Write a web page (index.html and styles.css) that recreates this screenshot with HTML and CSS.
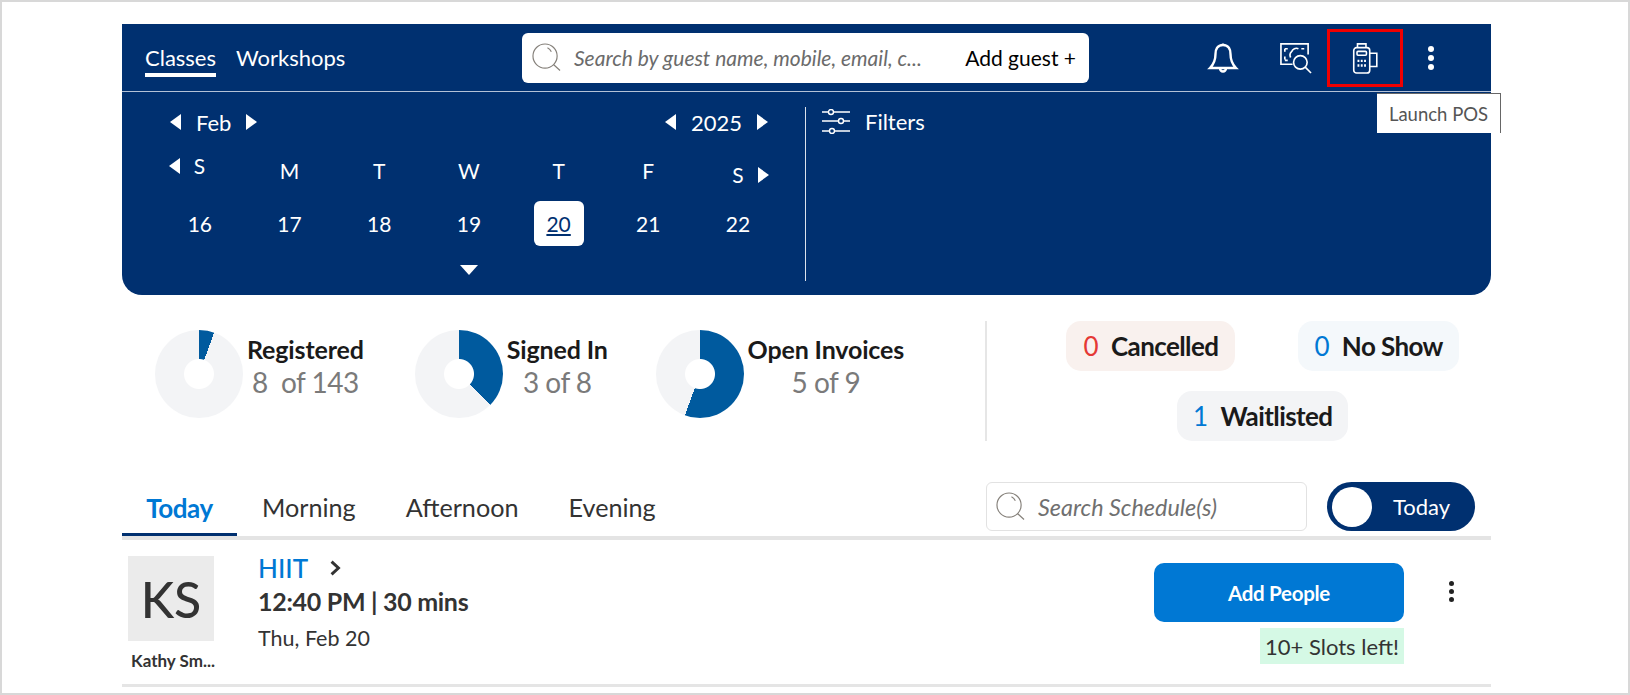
FILE: index.html
```html
<!DOCTYPE html>
<html lang="en">
<head>
    <meta charset="UTF-8">
    <title>Classes</title>
    <link rel="stylesheet" href="styles.css">
</head>
<body>
<div class="frame">
    <!-- Navy header panel -->
    <div class="panel">
        <div class="topbar">
            <div class="nav-tabs">
                <span class="nav-tab active">Classes</span>
                <span class="nav-tab">Workshops</span>
            </div>
            <div class="guest-search">
                <svg class="search-icon" viewBox="0 0 30 30"><circle cx="13.5" cy="13.5" r="12.5"/><path d="M22.5 22.5 L29 28.5 M16 5 A9 9 0 0 1 20 9"/></svg>
                <span class="guest-placeholder">Search by guest name, mobile, email, c...</span>
                <span class="add-guest">Add guest +</span>
            </div>
            <div class="top-icons">
                <svg class="top-icon bell" viewBox="0 0 32 32"><path d="M16 3 C10 3 8.500 8 8.500 12 C8.500 18 7 22 3 26 H29 C25 22 23.500 18 23.500 12 C23.500 8 22 3 16 3 Z M16 3 V1.500 M13 26.500 A3 3 0 0 0 19 26.500"/></svg>
                <svg class="top-icon money" viewBox="0 0 34 34"><path d="M14 24 H2 V3 H30 V14 M6 8 H9 M6 8 V11 M26 8 H23 M6 19 V16 M9 20 H6 M20 8 A5 5 0 0 0 13 11 M13 11 A5 5 0 0 0 12 17"/><circle cx="22" cy="22" r="7"/><path d="M27 27 L33 33"/></svg>
                <div class="pos-box">
                    <svg class="pos-icon" viewBox="0 0 28 34"><rect x="1.500" y="6" width="17" height="27" rx="3"/><path d="M5.500 6 V2 H14.500 V6 M18.500 12 H26 V26 H18.500"/><rect x="5" y="10" width="10" height="4" rx="1"/><path d="M5.500 20 H7.500 M9 20 H11 M12.500 20 H14.500 M5.500 25 H7.500 M9 25 H11 M12.500 25 H14.500" stroke-width="2.500"/></svg>
                </div>
                <div class="kebab light"><i></i><i></i><i></i></div>
            </div>
        </div>
        <div class="tooltip">Launch POS</div>
        <div class="cal-area">
            <div class="calendar">
                <div class="cal-head">
                    <div class="stepper"><span class="tri left"></span><span class="step-label">Feb</span><span class="tri right"></span></div>
                    <div class="stepper"><span class="tri left"></span><span class="step-label">2025</span><span class="tri right"></span></div>
                </div>
                <div class="week-row">
                    <div class="wd first"><span class="tri left"></span>S</div>
                    <div class="wd">M</div>
                    <div class="wd">T</div>
                    <div class="wd">W</div>
                    <div class="wd">T</div>
                    <div class="wd">F</div>
                    <div class="wd last">S<span class="tri right"></span></div>
                </div>
                <div class="day-row">
                    <div class="day"><span>16</span></div>
                    <div class="day"><span>17</span></div>
                    <div class="day"><span>18</span></div>
                    <div class="day"><span>19</span></div>
                    <div class="day"><span class="selected">20</span></div>
                    <div class="day"><span>21</span></div>
                    <div class="day"><span>22</span></div>
                </div>
                <div class="expand-row"><span class="tri down"></span></div>
            </div>
            <div class="filters">
                <svg class="filter-icon" viewBox="0 0 28 25"><path d="M0 3 H6 M12 3 H28 M0 12 H16 M22 12 H28 M0 22 H7 M13 22 H28"/><circle cx="9" cy="3" r="2.500"/><circle cx="19" cy="12" r="2.500"/><circle cx="10" cy="22" r="2.500"/></svg>
                <span>Filters</span>
            </div>
        </div>
    </div>

    <!-- Counts -->
    <div class="stats">
        <div class="stat stat-reg">
            <div class="donut" style="--pct: 5.6%"></div>
            <div class="stat-text"><div class="stat-title">Registered</div><div class="stat-value">8&nbsp; of 143</div></div>
        </div>
        <div class="stat stat-sign">
            <div class="donut" style="--pct: 37.5%"></div>
            <div class="stat-text"><div class="stat-title">Signed In</div><div class="stat-value">3 of 8</div></div>
        </div>
        <div class="stat stat-open">
            <div class="donut" style="--pct: 55.6%"></div>
            <div class="stat-text"><div class="stat-title">Open Invoices</div><div class="stat-value">5 of 9</div></div>
        </div>
        <div class="chips">
            <div class="chip-row">
                <div class="chip chip-cancel"><b class="red">0</b>Cancelled</div>
                <div class="chip chip-noshow"><b>0</b>No Show</div>
            </div>
            <div class="chip-row">
                <div class="chip chip-wait"><b>1</b>Waitlisted</div>
            </div>
        </div>
    </div>

    <!-- Schedule tabs -->
    <div class="sched-bar">
        <div class="sched-tabs">
            <span class="sched-tab active">Today</span>
            <span class="sched-tab">Morning</span>
            <span class="sched-tab">Afternoon</span>
            <span class="sched-tab">Evening</span>
        </div>
        <div class="sched-tools">
            <div class="sched-search">
                <svg class="search-icon" viewBox="0 0 30 30"><circle cx="13.5" cy="13.5" r="12.5"/><path d="M22.5 22.5 L29 28.5 M16 5 A9 9 0 0 1 20 9"/></svg>
                <span>Search Schedule(s)</span>
            </div>
            <div class="toggle"><span class="knob"></span><span>Today</span></div>
        </div>
    </div>

    <!-- Class row -->
    <div class="class-row">
        <div class="instructor">
            <div class="avatar">KS</div>
            <div class="instructor-name">Kathy Sm...</div>
        </div>
        <div class="class-info">
            <div class="class-name">HIIT <svg class="chevron" viewBox="0 0 10 14"><path d="M2 1.500 L8 7 L2 12.500"/></svg></div>
            <div class="class-time">12:40 PM | 30 mins</div>
            <div class="class-date">Thu, Feb 20</div>
        </div>
        <div class="class-actions">
            <div class="add-col">
                <div class="add-btn">Add People</div>
                <div class="slots">10+ Slots left!</div>
            </div>
            <div class="kebab dark"><i></i><i></i><i></i></div>
        </div>
    </div>
</div>
</body>
</html>
```

FILE: styles.css
```css
* {
    box-sizing: border-box;
}
body {
    margin: 0;
    font-family: 'Lato', 'Open Sans', sans-serif;
    background-color: #fff;
    color: #222;
}
.frame {
    width: 1630px;
    height: 695px;
    border: 2px solid #d8d8d8;
    padding: 22px 137px 0 120px;
    overflow: hidden;
    position: relative;
}

/* panel */
.panel {
    background-color: #003070;
    color: #fff;
    height: 271px;
    border-radius: 0 0 20px 20px;
}
.topbar {
    display: flex;
    align-items: center;
    height: 68px;
    border-bottom: 1px solid #b3c1d6;
    padding-left: 23px;
}
.nav-tabs {
    display: flex;
    gap: 20px;
    width: 377px;
    font-size: 22px;
}
.nav-tab {
    padding: 6px 0 2px;
    border-bottom: 4px solid transparent;
}
.nav-tab.active {
    border-bottom-color: #fff;
}
.guest-search {
    display: flex;
    align-items: center;
    width: 567px;
    height: 50px;
    background-color: #fff;
    border-radius: 6px;
    padding: 0 13px 0 10px;
    color: #000;
}
.search-icon {
    width: 29px;
    height: 29px;
    fill: none;
    stroke: #85807a;
    stroke-width: 1.2;
    flex: none;
}
.guest-placeholder {
    flex: 1;
    margin-left: 13px;
    font-size: 21px;
    font-style: italic;
    color: #6b6b6b;
    white-space: nowrap;
}
.add-guest {
    font-size: 21px;
    white-space: nowrap;
}
.top-icons {
    display: flex;
    align-items: center;
    margin-left: 118px;
}
.top-icon {
    fill: none;
    stroke: #fff;
    stroke-width: 2.4;
}
.bell {
    width: 32px;
    height: 32px;
}
.money {
    width: 33px;
    height: 33px;
    margin-left: 40px;
    stroke-width: 1.7;
}
.pos-box {
    width: 76px;
    height: 58px;
    margin-left: 15px;
    border: 3px solid #f00000;
    display: flex;
    align-items: center;
    justify-content: center;
}
.pos-icon {
    width: 27px;
    height: 32px;
    fill: none;
    stroke: #fff;
    stroke-width: 1.7;
}
.kebab {
    display: flex;
    flex-direction: column;
    gap: 3px;
}
.kebab i {
    width: 6px;
    height: 6px;
    border-radius: 50%;
    background-color: #fff;
}
.kebab.light {
    margin-left: 25px;
}
.kebab.dark i {
    background-color: #222;
    width: 5px;
    height: 5px;
}
.tooltip {
    position: absolute;
    left: 1375px;
    top: 91px;
    width: 124px;
    height: 40px;
    background-color: #fff;
    color: #555;
    border-top: 1px solid #666;
    border-right: 1px solid #666;
    font-size: 18.5px;
    display: flex;
    align-items: center;
    justify-content: center;
}

/* calendar */
.cal-area {
    display: flex;
    padding-top: 15px;
}
.calendar {
    width: 684px;
    height: 174px;
    border-right: 1px solid #dbe2ec;
    padding-left: 33px;
    padding-right: 21px;
}
.cal-head {
    display: flex;
    justify-content: space-between;
    padding: 0 16px 0 15px;
    height: 30px;
    align-items: center;
}
.stepper {
    display: flex;
    align-items: center;
    gap: 15px;
    font-size: 22px;
}
.tri {
    display: inline-block;
    width: 0;
    height: 0;
    border-style: solid;
    border-color: transparent;
}
.tri.left {
    border-width: 8px 11px 8px 0;
    border-right-color: #fff;
}
.tri.right {
    border-width: 8px 0 8px 11px;
    border-left-color: #fff;
}
.tri.down {
    border-width: 10px 9px 0 9px;
    border-top-color: #fff;
}
.week-row, .day-row {
    display: grid;
    grid-template-columns: repeat(7, 89.7px);
}
.week-row {
    height: 55px;
    font-size: 21px;
    align-items: start;
    margin-top: 9px;
}
.wd {
    text-align: center;
    padding-top: 12px;
}
.wd.first {
    display: flex;
    justify-content: center;
    align-items: center;
    gap: 14px;
    padding-top: 7px;
    padding-right: 26px;
}
.wd.last {
    display: flex;
    justify-content: center;
    align-items: center;
    gap: 14px;
    padding-top: 16px;
    padding-left: 25px;
}
.day-row {
    font-size: 21px;
}
.day {
    display: flex;
    justify-content: center;
}
.day span {
    width: 50px;
    height: 45px;
    display: flex;
    align-items: center;
    justify-content: center;
}
.day .selected {
    background-color: #fff;
    color: #003070;
    text-decoration: underline;
    border-radius: 6px;
}
.expand-row {
    display: flex;
    justify-content: center;
    width: 89.7px;
    margin-left: 269.1px;
    margin-top: 19px;
}
.filters {
    display: flex;
    align-items: center;
    gap: 15px;
    height: 28px;
    margin-left: 16px;
    font-size: 22px;
}
.filter-icon {
    width: 28px;
    height: 25px;
    fill: none;
    stroke: #fff;
    stroke-width: 1.4;
}

/* counts */
.stats {
    display: flex;
    height: 186px;
    padding-top: 35px;
    padding-left: 33px;
}
.stat {
    display: flex;
}
.donut {
    width: 88px;
    height: 88px;
    border-radius: 50%;
    flex: none;
    background: radial-gradient(circle, #fff 14.5px, transparent 15.5px), conic-gradient(#005a9e var(--pct), #f3f4f6 0);
}
.stat-text {
    text-align: center;
    margin-left: 4px;
    padding-top: 4px;
}
.stat-title {
    font-size: 25px;
    font-weight: 700;
    letter-spacing: -0.15px;
    color: #1a1a1a;
    white-space: nowrap;
}
.stat-value {
    font-size: 28px;
    color: #7a7a7a;
    letter-spacing: -0.5px;
    white-space: nowrap;
    line-height: 36px;
}
.stat-reg {
    width: 260px;
}
.stat-sign {
    width: 241px;
}
.stat-open {
    width: 330px;
}
.chips {
    width: 506px;
    height: 120px;
    margin-top: -9px;
    border-left: 2px solid #e6e6e6;
    padding-left: 47px;
}
.chip-row {
    display: flex;
    justify-content: center;
    gap: 63px;
    margin-bottom: 20px;
}
.chip {
    display: flex;
    align-items: center;
    height: 50px;
    border-radius: 15px;
    font-size: 26px;
    font-weight: 700;
    letter-spacing: -0.6px;
    color: #1a1a1a;
    padding: 0 16px;
}
.chip b {
    font-weight: 400;
    color: #0078d4;
    margin-right: 13px;
}
.chip b.red {
    color: #e53935;
}
.chip-cancel {
    background-color: #f9f1ee;
    padding: 0 17px;
}
.chip-noshow {
    background-color: #f4f8fb;
}
.chip-wait {
    background-color: #f3f4f6;
}

/* schedule tabs */
.sched-bar {
    display: flex;
    justify-content: space-between;
    height: 59px;
    border-bottom: 4px solid #e4e4e4;
}
.sched-tabs {
    display: flex;
    font-size: 25.2px;
    color: #333;
}
.sched-tab {
    height: 55px;
    margin-right: 50px;
    padding-top: 11px;
}
.sched-tab.active {
    width: 115px;
    margin-right: 25px;
    text-align: center;
    font-size: 26px;
    color: #0078d4;
    font-weight: 700;
    letter-spacing: -0.4px;
    border-bottom: 3px solid #003070;
}
.sched-tools {
    display: flex;
    gap: 20px;
    margin-right: 16px;
    padding-top: 1px;
}
.sched-search {
    display: flex;
    align-items: center;
    width: 321px;
    height: 49px;
    border: 1px solid #e2e2e2;
    border-radius: 6px;
    padding-left: 9px;
    font-size: 23.4px;
    font-style: italic;
    color: #707070;
    gap: 13px;
}
.toggle {
    display: flex;
    align-items: center;
    width: 148px;
    height: 49px;
    background-color: #003070;
    border-radius: 25px;
    color: #fff;
    font-size: 22px;
    padding-left: 5px;
}
.knob {
    width: 40px;
    height: 40px;
    border-radius: 50%;
    background-color: #fff;
    margin-right: 21px;
}

/* class row */
.class-row {
    display: flex;
    height: 147px;
    border-bottom: 3px solid #e5e5e5;
}
.instructor {
    width: 136px;
    padding: 16px 0 0 6px;
}
.avatar {
    width: 86px;
    height: 85px;
    background-color: #ebebeb;
    color: #333;
    font-size: 50px;
    font-weight: 500;
    display: flex;
    align-items: center;
    justify-content: center;
}
.instructor-name {
    width: 100px;
    margin: 9px 0 0 3px;
    font-size: 17px;
    font-weight: 700;
    white-space: nowrap;
    color: #333;
}
.class-info {
    flex: 1;
    padding-top: 12px;
}
.class-name {
    display: flex;
    align-items: center;
    font-size: 26px;
    font-weight: 500;
    color: #0078d4;
    height: 32px;
}
.chevron {
    width: 12px;
    height: 16px;
    margin-left: 21px;
    fill: none;
    stroke: #333;
    stroke-width: 2.6;
}
.class-time {
    font-size: 25px;
    font-weight: 700;
    letter-spacing: -0.3px;
    color: #333;
    margin-top: 2px;
}
.class-date {
    font-size: 21.5px;
    color: #333;
    margin-top: 9px;
}
.class-actions {
    display: flex;
    padding-top: 23px;
    margin-right: 37px;
}
.add-col {
    display: flex;
    flex-direction: column;
    align-items: flex-end;
}
.add-btn {
    width: 250px;
    height: 59px;
    background-color: #0078d4;
    border-radius: 10px;
    color: #fff;
    font-size: 20.5px;
    font-weight: 700;
    letter-spacing: -0.3px;
    display: flex;
    align-items: center;
    justify-content: center;
}
.slots {
    margin-top: 6px;
    height: 36px;
    width: 144px;
    background-color: #d5f9e5;
    color: #333;
    font-size: 22px;
    display: flex;
    align-items: center;
    justify-content: center;
    white-space: nowrap;
}
.kebab.dark {
    margin: 18px 0 0 45px;
}
```
